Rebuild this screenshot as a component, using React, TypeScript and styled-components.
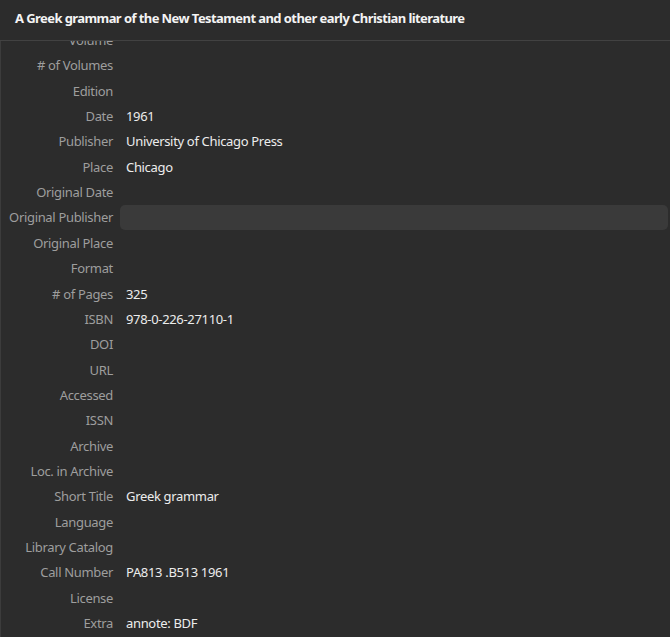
import styled, { createGlobalStyle } from "styled-components";

const GlobalStyle = createGlobalStyle`
  * { margin: 0; padding: 0; box-sizing: border-box; }
  html, body { background: #2c2c2c; }
  body { font-family: "Noto Sans", "DejaVu Sans", sans-serif; }
`;

type Field = { label: string; value?: string; hover?: boolean };

const fields: Field[] = [
  { label: "Volume" },
  { label: "# of Volumes" },
  { label: "Edition" },
  { label: "Date", value: "1961" },
  { label: "Publisher", value: "University of Chicago Press" },
  { label: "Place", value: "Chicago" },
  { label: "Original Date" },
  { label: "Original Publisher", hover: true },
  { label: "Original Place" },
  { label: "Format" },
  { label: "# of Pages", value: "325" },
  { label: "ISBN", value: "978-0-226-27110-1" },
  { label: "DOI" },
  { label: "URL" },
  { label: "Accessed" },
  { label: "ISSN" },
  { label: "Archive" },
  { label: "Loc. in Archive" },
  { label: "Short Title", value: "Greek grammar" },
  { label: "Language" },
  { label: "Library Catalog" },
  { label: "Call Number", value: "PA813 .B513 1961" },
  { label: "License" },
  { label: "Extra", value: "annote: BDF" },
];

const App = () => {
  return (
    <Pane>
      <GlobalStyle />
      <Header>
        <Title>A Greek grammar of the New Testament and other early Christian literature</Title>
      </Header>
      <Body>
        <List>
          {fields.map((f) => (
            <Row key={f.label}>
              <Label>{f.label}</Label>
              <Value $hover={f.hover}>{f.value}</Value>
            </Row>
          ))}
        </List>
      </Body>
    </Pane>
  );
};

export default App;

const Pane = styled.div`
  width: 670px;
  height: 637px;
  overflow: hidden;
  display: flex;
  flex-direction: column;
  background: #2c2c2c;
`;

const Header = styled.header`
  position: relative;
  z-index: 1;
  height: 41px;
  flex-shrink: 0;
  display: flex;
  align-items: center;
  padding: 0 15px 5px;
  background: #2c2c2c;
  border-bottom: 1px solid #424242;
`;

const Title = styled.h1`
  font-size: 13px;
  font-weight: 700;
  letter-spacing: -0.58px;
  color: #f4f4f4;
  white-space: nowrap;
`;

const Body = styled.div`
  flex: 1;
  overflow: hidden;
  border-left: 1px solid #3c3c3c;
`;

const List = styled.div`
  margin-top: -13.6px;
  padding-right: 2px;
`;

const Row = styled.div`
  display: grid;
  grid-template-columns: 112px 1fr;
  column-gap: 7px;
  height: 25.35px;
  align-items: center;
  letter-spacing: -0.33px;
`;

const Label = styled.div`
  text-align: right;
  font-size: 13px;
  color: #9e9e9e;
  white-space: nowrap;
`;

const Value = styled.div<{ $hover?: boolean }>`
  height: 25px;
  display: flex;
  align-items: center;
  padding-left: 6px;
  border-radius: 5px;
  font-size: 13px;
  color: #ececec;
  background: ${(p) => (p.$hover ? "#3a3a3a" : "transparent")};
`;
